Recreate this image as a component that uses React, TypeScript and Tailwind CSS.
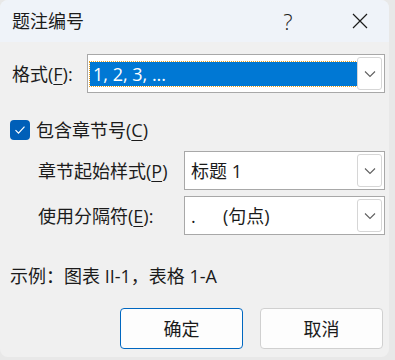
const font = { fontFamily: '"Open Sans", "Noto Sans CJK SC", sans-serif' }

function Chevron() {
  return (
    <svg width="12" height="8" viewBox="0 0 12 8" fill="none">
      <path d="M1 1.5l5 5 5-5" stroke="#5f5f5f" strokeWidth="1.1" />
    </svg>
  )
}

function Select({ children, focused }: { children: React.ReactNode; focused?: boolean }) {
  return (
    <div className="flex-1 h-[39px] flex items-stretch bg-white border border-[#a8a8a8] p-[1px]">
      <div className="flex-1 flex items-center min-w-0">
        {focused ? (
          <div className="ml-[1px] h-[24px] w-full bg-[#0078d4] outline outline-1 outline-dotted outline-[#e8a020] flex items-center pl-[3px] text-white">
            {children}
          </div>
        ) : (
          <div className="pl-[5px] flex items-center">{children}</div>
        )}
      </div>
      <div className="w-[25px] my-[1px] mr-[1px] flex items-center justify-center border border-[#d6d6d6] rounded-[3px] bg-white">
        <Chevron />
      </div>
    </div>
  )
}

const Key = ({ k }: { k: string }) => <span className="underline underline-offset-[3px]">{k}</span>

export default function App() {
  return (
    <div className="w-[395px] h-[360px] bg-[#e8e8e8]" style={font}>
      <div className="w-[389px] h-[357px] rounded-lg bg-[#f0f0f0] overflow-hidden flex flex-col text-[18px] leading-[26px] text-[#1b1b1b]">
        {/* title bar */}
        <div className="h-[42px] shrink-0 bg-[#eff3f9] flex items-center pl-[12px]">
          <span className="flex-1">题注编号</span>
          <span className="w-[20px] text-center text-[22px] font-light mr-[54px]">?</span>
          <svg width="16" height="16" viewBox="0 0 16 16" className="mr-[21px]">
            <path d="M1 1l14 14M15 1L1 15" stroke="#1b1b1b" strokeWidth="1.2" />
          </svg>
        </div>

        {/* format */}
        <div className="mt-[12px] flex items-center pr-[4px]">
          <span className="w-[87px] pl-[12px]">
            格式(<Key k="F" />):
          </span>
          <Select focused>1, 2, 3, ...</Select>
        </div>

        {/* chapter number */}
        <div className="mt-[24px] h-[26px] flex items-center pl-[10px]">
          <div className="w-[20px] h-[20px] rounded-[4px] bg-[#005fb8] flex items-center justify-center">
            <svg width="12" height="10" viewBox="0 0 12 10" fill="none">
              <path d="M1.5 5.2l3 3 6-6.5" stroke="white" strokeWidth="1.2" />
            </svg>
          </div>
          <span className="ml-[6px]">
            包含章节号(<Key k="C" />)
          </span>
        </div>

        <div className="mt-[8px] flex items-center pr-[4px]">
          <span className="w-[184px] pl-[38px]">
            章节起始样式(<Key k="P" />)
          </span>
          <Select>标题 1</Select>
        </div>

        <div className="mt-[6px] flex items-center pr-[4px]">
          <span className="w-[184px] pl-[38px]">
            使用分隔符(<Key k="E" />):
          </span>
          <Select>
            <span className="w-[32px]">.</span>
            <span>(句点)</span>
          </Select>
        </div>

        <div className="mt-[28px] pl-[10px]">示例：图表 II-1，表格 1-A</div>

        <div className="mt-[19px] flex justify-end gap-[17px] pr-[6px]">
          <button className="w-[123px] h-[41px] rounded-[4px] bg-[#fdfdfd] border border-[#0067c0]">确定</button>
          <button className="w-[123px] h-[41px] rounded-[4px] bg-[#fdfdfd] border border-[#d0d0d0]">取消</button>
        </div>
      </div>
    </div>
  )
}
